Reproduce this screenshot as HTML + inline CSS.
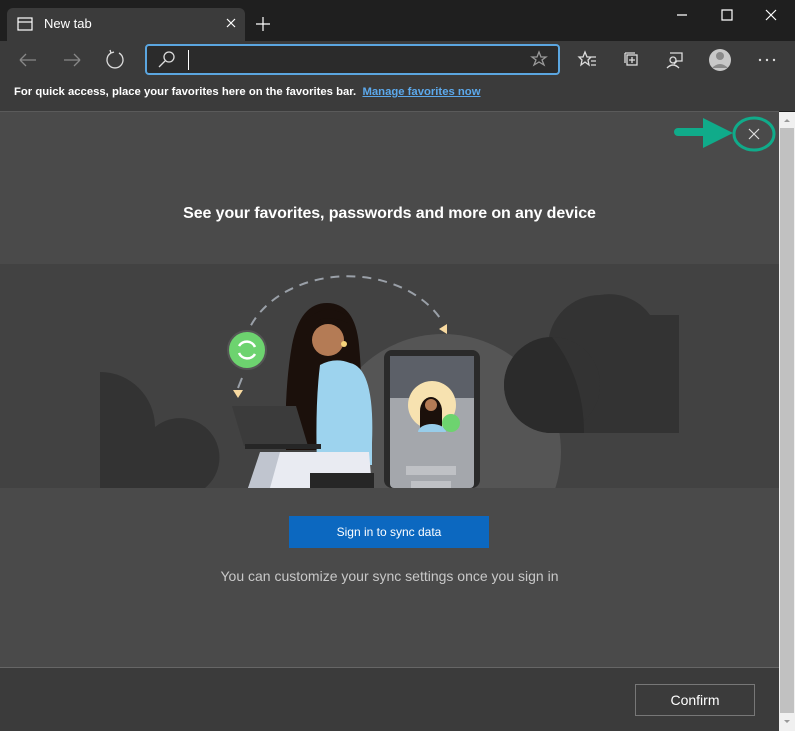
<!DOCTYPE html>
<html><head><meta charset="utf-8"><style>
*{margin:0;padding:0;box-sizing:border-box}
body{width:795px;height:731px;overflow:hidden;background:#1f1f1f;font-family:"Liberation Sans",sans-serif;position:relative;color:#fff}
.a{position:absolute}
</style></head><body>
<div class="a" style="left:0;top:0;width:795px;height:41px;background:#1f1f1f"></div>
<div class="a" style="left:7px;top:8px;width:238px;height:33px;background:#3b3b3b;border-radius:6px 6px 0 0"></div>
<div class="a" style="left:44px;top:16px;font-size:13px;color:#fff">New tab</div>
<div class="a" style="left:0;top:41px;width:795px;height:70px;background:#3b3b3b"></div>
<div class="a" style="left:145px;top:44px;width:415px;height:31px;border:2px solid #5ba6e0;border-radius:4px;background:#2b2b2b"></div>
<div class="a" style="left:188px;top:50px;width:1px;height:20px;background:#fff"></div>
<div class="a" style="left:14px;top:86px;font-size:11.3px;font-weight:bold;color:#fff;white-space:nowrap">For quick access, place your favorites here on the favorites bar.&nbsp; <span style="color:#5ca9ec;text-decoration:underline">Manage favorites now</span></div>
<div class="a" style="left:0;top:111px;width:779px;height:1px;background:#5a5a5a"></div>
<div class="a" style="left:0;top:112px;width:779px;height:555px;background:#4a4a4a"></div>
<div class="a" style="left:0;top:264px;width:779px;height:224px;background:#424242"></div>
<div class="a" style="left:0;top:667px;width:779px;height:1px;background:#666"></div>
<div class="a" style="left:0;top:668px;width:779px;height:63px;background:#3b3b3b"></div>
<div class="a" style="left:779px;top:112px;width:16px;height:619px;background:#f0f0f0"></div>
<div class="a" style="left:780px;top:128px;width:14px;height:585px;background:#c1c1c1"></div>
<svg class="a" style="left:0;top:0" width="795" height="731">
<g stroke="#fff" fill="none" stroke-width="1.2">
<rect x="18" y="18" width="14" height="12"/><line x1="18" y1="22" x2="32" y2="22"/>
<path d="M227 19l8 8M235 19l-8 8M263 17v14M256 24h14"/>
<path d="M677 15h10M722 10h10v10h-10zM766 10l10 10M776 10l-10 10"/>
</g>
<g stroke="#888" fill="none" stroke-width="1.3"><path d="M20 60h16M20 60l6-6M20 60l6 6M64 60h16M80 60l-6-6M80 60l-6 6"/></g>
<g stroke="#ddd" fill="none" stroke-width="1.3">
<path d="M111 53a8 8 0 1 0 8 0"/><path d="M111 53l-1-3M111 53l3-1"/>
<circle cx="169" cy="57" r="5"/><path d="M165 61l-6 6"/>
<path d="M539 52l2 5 5 0-4 3 2 5-5-3-5 3 2-5-4-3 5 0z" stroke="#999"/>
<path d="M585 52l2 5 4 0-3 3 1 5-4-3-4 3 1-5-3-3 4 0zM590 57h6M591 61h5M591 65h5"/>
<rect x="627" y="55" width="10" height="10"/><path d="M625 53h10M625 53v10M632 57v6M629 60h6"/>
<path d="M670 53h12v8h-5l-3 3"/><circle cx="673" cy="60" r="3"/><path d="M667 68q6-6 12 0"/>
</g>
<circle cx="720" cy="60" r="11" fill="#c8c8c8"/><circle cx="720" cy="56" r="4" fill="#8a8a8a"/><path d="M712 68q8-8 16 0" fill="#8a8a8a"/>
<g fill="#ddd"><circle cx="760" cy="60" r="1.2"/><circle cx="767" cy="60" r="1.2"/><circle cx="774" cy="60" r="1.2"/></g>
<path d="M784 122l3-3 3 3z M784 720l3 3 3-3z" fill="#999"/>
<!-- illustration -->
<path d="M100 488V372a55 55 0 0 1 55 55a30 30 0 0 1 50 61z" fill="#333"/>
<circle cx="443" cy="452" r="118" fill="#555"/>
<rect x="90" y="488" width="600" height="179" fill="#4a4a4a"/>
<path d="M548 433V345a52 52 0 0 1 52-50a50 50 0 0 1 50 20h29v118z" fill="#333"/>
<circle cx="552" cy="385" r="48" fill="#333"/>
<path d="M552 337a48 48 0 0 0 0 96h32q0-55-32-96z" fill="#2b2b2b"/>
<path d="M245 340a105 80 0 0 1 195-22" stroke="#9aa0a8" stroke-width="2" stroke-dasharray="9 7" fill="none"/>
<path d="M238 388l4-10" stroke="#9aa0a8" stroke-width="2"/>
<path d="M233 390l5 8 5-8zM447 324l-8 5 8 5z" fill="#f7d9a0"/>
<circle cx="247" cy="350" r="19" fill="#6dd36f" stroke="#555" stroke-width="2"/>
<path d="M239 346a9 9 0 0 1 16 1M255 354a9 9 0 0 1-16-1" stroke="#fff" stroke-width="2.5" fill="none"/>
<rect x="384" y="350" width="96" height="138" rx="8" fill="#2a2a2a"/>
<rect x="390" y="356" width="84" height="132" rx="4" fill="#a4a7ac"/>
<rect x="390" y="356" width="84" height="42" fill="#5c6068"/>
<circle cx="432" cy="405" r="24" fill="#f7e2b0"/>
<rect x="406" y="466" width="50" height="9" fill="#bfc1c5"/><rect x="411" y="481" width="40" height="7" fill="#bfc1c5"/>
<path d="M420 431v-20a11 14 0 0 1 22 0v20z" fill="#1b100b"/>
<circle cx="431" cy="405" r="6" fill="#b47b55"/>
<path d="M418 432a14 8 0 0 1 28 0z" fill="#98cdea"/>
<circle cx="451" cy="423" r="9" fill="#6dd36f"/>
<path d="M286 450q-2-60 6-105q8-42 35-42q28 0 32 42q4 40 2 105z" fill="#1b100b"/>
<circle cx="328" cy="340" r="16" fill="#b47b55"/>
<path d="M306 335q10-26 42-12v-6q-20-16-42 3z" fill="#1b100b"/>
<circle cx="344" cy="344" r="3" fill="#f7d37a"/>
<path d="M320 365q15-8 30-2q25 5 22 80v22h-55q-2-60 3-100z" fill="#9dd3ee"/>
<path d="M232 406h64l12 40h-64z" fill="#3b3b3b"/><rect x="245" y="444" width="76" height="5" fill="#262626"/>
<path d="M248 488l16-36h105l3 36z" fill="#e9ebf2"/>
<path d="M248 488l12-36h20l-10 36z" fill="#c0c5cf"/>
<rect x="310" y="473" width="64" height="15" fill="#262626"/>
<!-- green arrow -->
<path d="M678 132h26" stroke="#10ab8a" stroke-width="8" stroke-linecap="round"/>
<path d="M703 118l30 15-30 15z" fill="#10ab8a"/>
<ellipse cx="754" cy="134" rx="20" ry="16" fill="none" stroke="#10ab8a" stroke-width="3"/>
<path d="M749 129l10 10M759 129l-10 10" stroke="#ddd" stroke-width="1.2"/>
</svg>
<div class="a" style="left:0;top:205px;width:779px;text-align:center;font-size:16px;font-weight:bold;color:#fff;letter-spacing:-0.1px">See your favorites, passwords and more on any device</div>
<div class="a" style="left:289px;top:516px;width:200px;height:32px;background:#0c68c0;color:#fff;font-size:12px;text-align:center;line-height:32px">Sign in to sync data</div>
<div class="a" style="left:0;top:568px;width:779px;text-align:center;font-size:14px;color:#c8c8c8">You can customize your sync settings once you sign in</div>
<div class="a" style="left:635px;top:684px;width:120px;height:32px;border:1px solid #777;color:#fff;font-size:14px;text-align:center;line-height:30px">Confirm</div>
</body></html>
